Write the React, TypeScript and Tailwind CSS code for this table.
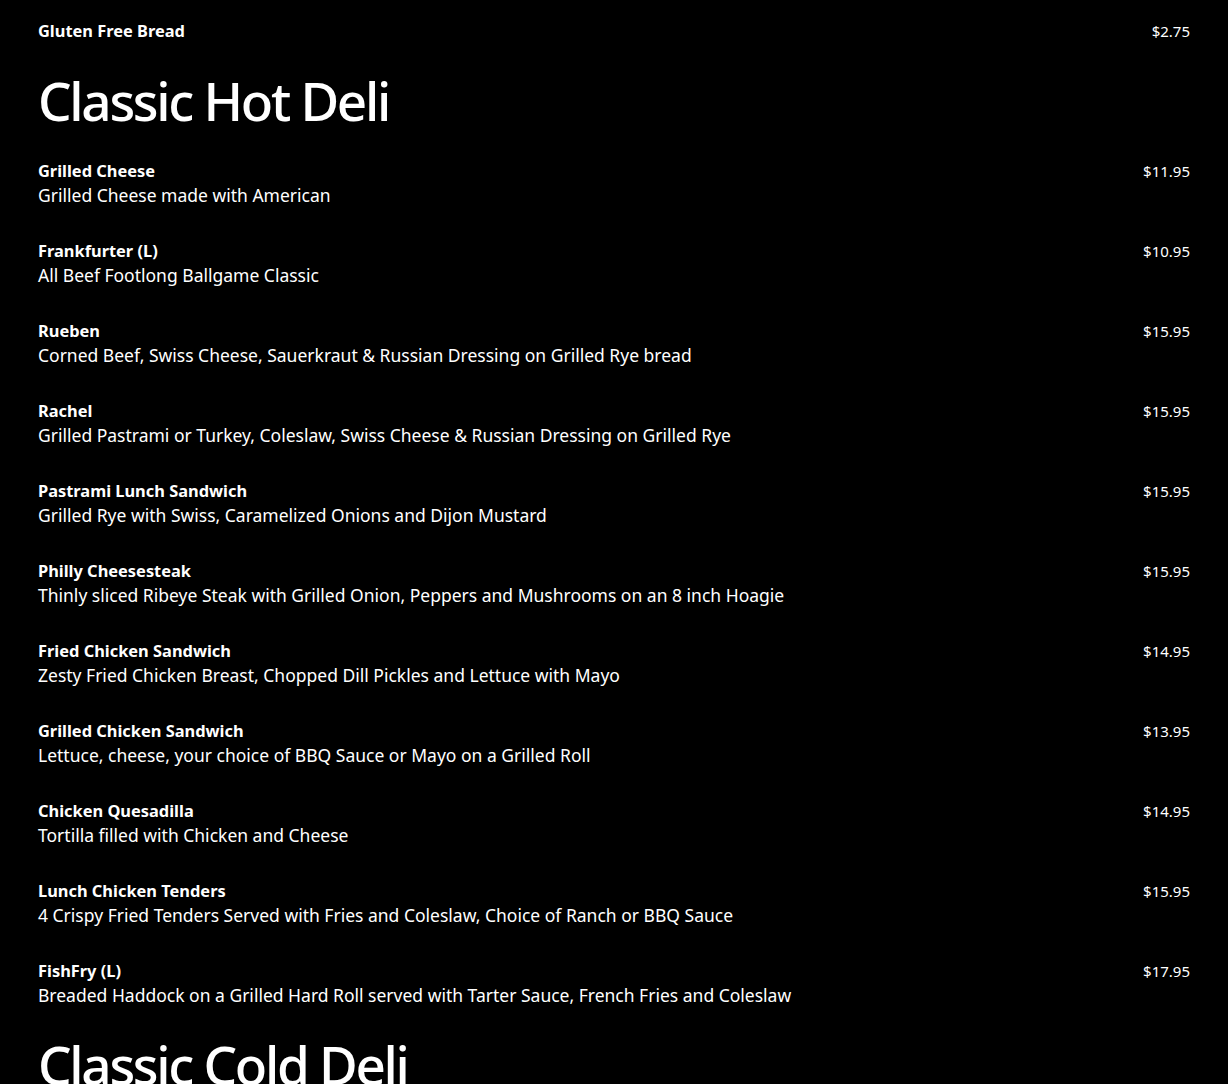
const hotDeli = [
  { name: 'Grilled Cheese', desc: 'Grilled Cheese made with American', price: '$11.95' },
  { name: 'Frankfurter (L)', desc: 'All Beef Footlong Ballgame Classic', price: '$10.95' },
  { name: 'Rueben', desc: 'Corned Beef, Swiss Cheese, Sauerkraut & Russian Dressing on Grilled Rye bread', price: '$15.95' },
  { name: 'Rachel', desc: 'Grilled Pastrami or Turkey, Coleslaw, Swiss Cheese & Russian Dressing on Grilled Rye', price: '$15.95' },
  { name: 'Pastrami Lunch Sandwich', desc: 'Grilled Rye with Swiss, Caramelized Onions and Dijon Mustard', price: '$15.95' },
  { name: 'Philly Cheesesteak', desc: 'Thinly sliced Ribeye Steak with Grilled Onion, Peppers and Mushrooms on an 8 inch Hoagie', price: '$15.95' },
  { name: 'Fried Chicken Sandwich', desc: 'Zesty Fried Chicken Breast, Chopped Dill Pickles and Lettuce with Mayo', price: '$14.95' },
  { name: 'Grilled Chicken Sandwich', desc: 'Lettuce, cheese, your choice of BBQ Sauce or Mayo on a Grilled Roll', price: '$13.95' },
  { name: 'Chicken Quesadilla', desc: 'Tortilla filled with Chicken and Cheese', price: '$14.95' },
  { name: 'Lunch Chicken Tenders', desc: '4 Crispy Fried Tenders Served with Fries and Coleslaw, Choice of Ranch or BBQ Sauce', price: '$15.95' },
  { name: 'FishFry (L)', desc: 'Breaded Haddock on a Grilled Hard Roll served with Tarter Sauce, French Fries and Coleslaw', price: '$17.95' },
];

function MenuItem({ name, desc, price }: { name: string; desc?: string; price: string }) {
  return (
    <div className="flex justify-between items-start pb-8">
      <div className="flex flex-col">
        <span className="font-bold text-[16.4px] leading-6">{name}</span>
        {desc && <span className="text-[17.5px] leading-6">{desc}</span>}
      </div>
      <span className="text-[15px] leading-6 shrink-0">{price}</span>
    </div>
  );
}

export default function App() {
  return (
    <div
      className="bg-black text-white h-[1084px] overflow-hidden px-[38px] pt-[19px]"
      style={{ fontFamily: '"Noto Sans", sans-serif' }}
    >
      <MenuItem name="Gluten Free Bread" price="$2.75" />
      <h2 className="text-[53px] leading-[60px] font-medium tracking-[-2.3px] mb-[28px] -mt-[4px]">Classic Hot Deli</h2>
      {hotDeli.map((item) => (
        <MenuItem key={item.name} {...item} />
      ))}
      <h2 className="text-[53px] leading-[60px] font-medium tracking-[-2.3px] -mt-[4px]">Classic Cold Deli</h2>
    </div>
  );
}
